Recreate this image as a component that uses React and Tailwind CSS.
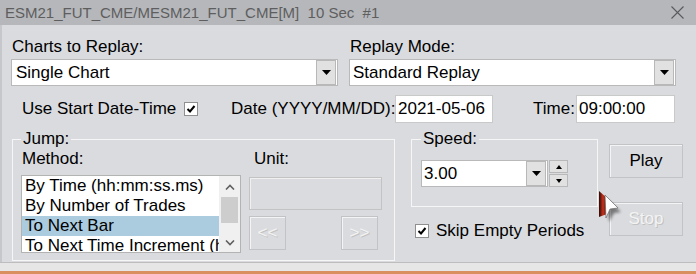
import React from "react";

const font = "font-['Liberation_Sans',Arial,sans-serif]";

function Check() {
  return (
    <div className="w-[14px] h-[14px] bg-white border border-[#8f8f8f] flex items-center justify-center shrink-0">
      <svg width="10" height="10" viewBox="0 0 10 10">
        <path d="M1.5 5 L4 7.5 L8.5 2" fill="none" stroke="#000" strokeWidth="2" />
      </svg>
    </div>
  );
}

function DropBtn({ className = "" }) {
  return (
    <div className={`h-full w-[20px] bg-[#e1e1e1] border border-[#b8b8b8] flex items-center justify-center ${className}`}>
      <svg width="9" height="5" viewBox="0 0 9 5">
        <path d="M0 0 H9 L4.5 5 Z" fill="#000" />
      </svg>
    </div>
  );
}

function Select({ value, className = "" }) {
  return (
    <div className={`h-[27px] bg-white border border-[#b9b9b9] flex items-center ${className}`}>
      <span className="flex-1 whitespace-nowrap">{value}</span>
      <DropBtn className="mr-[1px]" />
    </div>
  );
}

function Chevron({ up }) {
  return (
    <svg width="10" height="6" viewBox="0 0 10 6">
      <path d={up ? "M1 5.5 L5 1.5 L9 5.5" : "M1 0.5 L5 4.5 L9 0.5"} fill="none" stroke="#606060" strokeWidth="1.6" />
    </svg>
  );
}

function WinButton({ children, disabled, className = "" }) {
  return (
    <div
      className={`flex items-center justify-center bg-[#dadbde] border border-[#c2c3c6] shadow-[inset_1px_1px_0_#f4f4f4] ${
        disabled ? "text-[#f3f3f3] [text-shadow:1px_1px_0_#c2c2c2]" : "text-black"
      } ${className}`}
    >
      {children}
    </div>
  );
}

export default function App() {
  const methods = [
    "By Time (hh:mm:ss.ms)",
    "By Number of Trades",
    "To Next Bar",
    "To Next Time Increment (hh:mm:ss)",
  ];

  return (
    <div className={`relative w-[696px] h-[274px] overflow-hidden bg-[#dadbde] ${font} text-[17px] leading-[20px] text-black`}>
      {/* title bar */}
      <div className="h-[25px] bg-[#b5b7bb] flex items-center pl-[5px] pr-[12px] text-[15px] text-[#5e5e5e]">
        <span className="whitespace-pre">ESM21_FUT_CME/MESM21_FUT_CME[M]  10 Sec  #1</span>
        <svg className="ml-auto" width="13" height="13" viewBox="0 0 13 13">
          <path d="M0.5 0.5 L12.5 12.5 M12.5 0.5 L0.5 12.5" stroke="#5a5a5a" strokeWidth="1.1" />
        </svg>
      </div>

      <div className="h-[237px] shadow-[inset_2px_0_0_#c6c7ca]">
        {/* charts / replay mode */}
        <div className="flex pt-[12px] pl-[11px] gap-[11px]">
          <div className="w-[327px]">
            <div className="pl-[1px]">Charts to Replay:</div>
            <Select value="Single Chart" className="mt-[2px] pl-[4px]" />
          </div>
          <div className="w-[327px]">
            <div className="pl-[1px]">Replay Mode:</div>
            <Select value="Standard Replay" className="mt-[2px] pl-[3px]" />
          </div>
        </div>

        {/* start date-time row */}
        <div className="flex items-center h-[28px] mt-[9px]">
          <span className="ml-[22px] w-[162px] whitespace-nowrap">Use Start Date-Time</span>
          <Check />
          <span className="ml-[33px] w-[164px] whitespace-nowrap">Date (YYYY/MM/DD):</span>
          <div className="w-[98px] h-[28px] bg-white border border-[#c9c9c9] flex items-center pl-[2px]">2021-05-06</div>
          <span className="ml-[40px] w-[43px]">Time:</span>
          <div className="w-[99px] h-[28px] bg-white border border-[#c9c9c9] flex items-center pl-[2px]">09:00:00</div>
        </div>

        {/* lower section */}
        <div className="flex items-start mt-[8px]">
          <fieldset className="ml-[12px] w-[383px] h-[130px] border border-[#f6f6f6] pl-[8px]">
            <legend className="px-[2px] leading-[16px]">Jump:</legend>
            <div className="flex">
              <div className="w-[220px]">
                <div className="pl-[1px] mt-[2px]">Method:</div>
                <div className="mt-[6px] h-[78px] bg-white border border-[#b3b3b3] flex overflow-hidden">
                  <div className="w-[197px]">
                    {methods.map((m, i) => (
                      <div
                        key={m}
                        className={`h-[20px] pl-[3px] whitespace-nowrap overflow-hidden ${i === 2 ? "bg-[#abcbdf]" : ""}`}
                      >
                        {m}
                      </div>
                    ))}
                  </div>
                  <div className="w-[21px] bg-[#f0f0f0] flex flex-col">
                    <div className="h-[21px] flex items-center justify-center"><Chevron up /></div>
                    <div className="h-[26px] mx-[2px] bg-[#cdcdcd]" />
                    <div className="flex-1 flex items-end justify-center pb-[6px]"><Chevron /></div>
                  </div>
                </div>
              </div>
              <div className="ml-[8px] w-[133px]">
                <div className="pl-[5px] mt-[2px]">Unit:</div>
                <div className="mt-[8px] h-[33px] border border-[#c3c3c3] shadow-[inset_1px_1px_0_#f0f0f0]" />
                <div className="mt-[6px] w-[129px] flex justify-between">
                  <WinButton disabled className="w-[37px] h-[34px]">&lt;&lt;</WinButton>
                  <WinButton disabled className="w-[37px] h-[34px]">&gt;&gt;</WinButton>
                </div>
              </div>
            </div>
          </fieldset>

          <div className="ml-[16px] w-[187px] flex flex-col">
            <fieldset className="h-[76px] border border-[#f6f6f6] pl-[9px]">
              <legend className="px-[2px] leading-[16px]">Speed:</legend>
              <div className="flex mt-[13px]">
                <div className="w-[127px] h-[27px] bg-white border border-[#b9b9b9] flex items-center pl-[2px]">
                  <span className="flex-1">3.00</span>
                  <DropBtn className="mr-[1px]" />
                </div>
                <div className="ml-[1px] w-[19px] h-[27px] flex flex-col gap-[1px]">
                  <div className="flex-1 bg-[#e1e1e1] border border-[#b8b8b8] flex items-center justify-center">
                    <svg width="6" height="4" viewBox="0 0 6 4"><path d="M0 4 H6 L3 0 Z" fill="#000" /></svg>
                  </div>
                  <div className="flex-1 bg-[#e1e1e1] border border-[#b8b8b8] flex items-center justify-center">
                    <svg width="6" height="4" viewBox="0 0 6 4"><path d="M0 0 H6 L3 4 Z" fill="#000" /></svg>
                  </div>
                </div>
              </div>
            </fieldset>
            <div className="flex items-center mt-[14px] ml-[4px]">
              <Check />
              <span className="ml-[7px] whitespace-nowrap">Skip Empty Periods</span>
            </div>
          </div>

          <div className="ml-[11px] flex flex-col">
            <WinButton className="mt-[13px] w-[74px] h-[34px]">Play</WinButton>
            <WinButton disabled className="mt-[24px] w-[74px] h-[34px]">Stop</WinButton>
          </div>
        </div>
      </div>

      {/* chart behind the dialog */}
      <div className="h-[12px] border-t border-[#bdbdbd] bg-[#e6e6e6] flex flex-col justify-end">
        <div className="h-[3px] bg-[#d98f5e]" />
      </div>

      {/* mouse pointer */}
      <svg className="absolute left-[596px] top-[188px]" width="28" height="38" viewBox="0 0 28 38">
        <defs>
          <linearGradient id="wedge" x1="0" x2="1" y1="0" y2="0">
            <stop offset="0" stopColor="#2a0a06" />
            <stop offset="0.5" stopColor="#c8321c" />
            <stop offset="1" stopColor="#5a1208" />
          </linearGradient>
          <filter id="blur" x="-50%" y="-50%" width="200%" height="200%">
            <feGaussianBlur stdDeviation="1.5" />
          </filter>
        </defs>
        <path d="M11 11 L25 24 L18 25 L13 34 Z" fill="#000" opacity="0.45" filter="url(#blur)" />
        <path d="M3 3 L11 10 L11 26 L3 29 Z" fill="url(#wedge)" />
        <path d="M9 7 L22 20 L14 21 L10 30 Z" fill="#fff" stroke="#6a6a6a" strokeWidth="0.7" />
      </svg>
    </div>
  );
}
